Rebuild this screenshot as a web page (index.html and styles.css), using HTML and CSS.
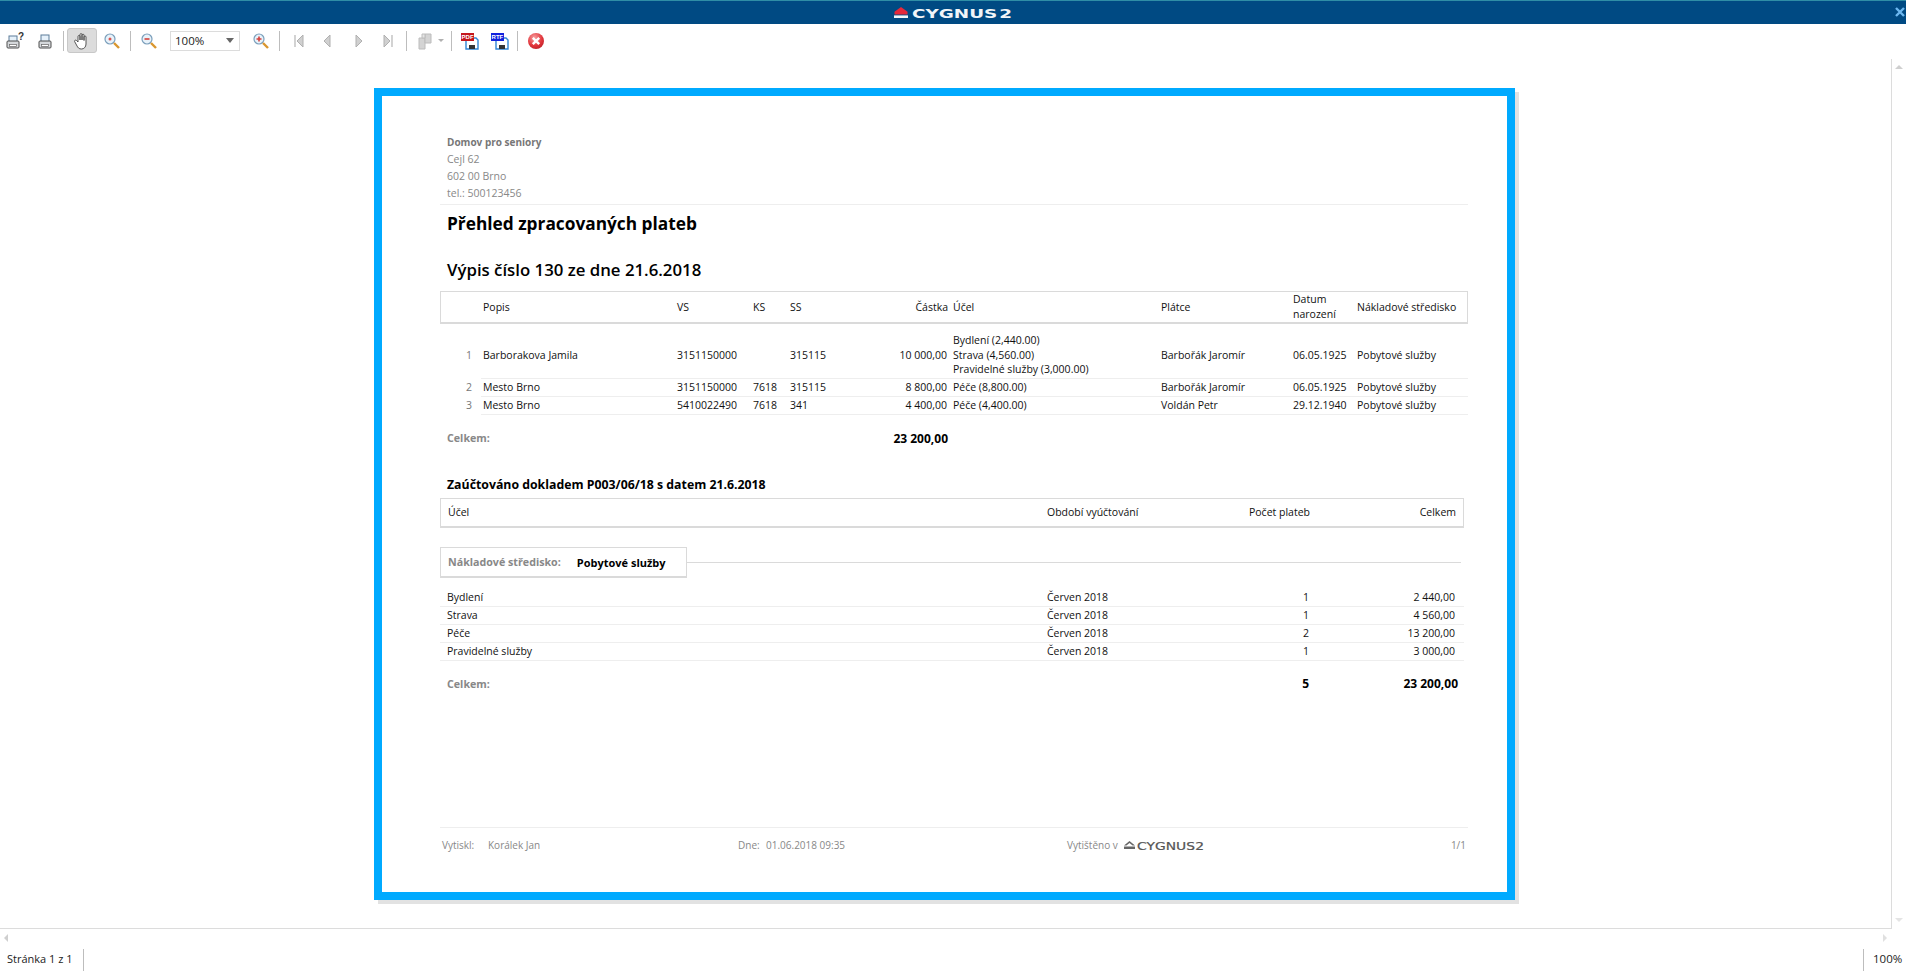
FILE: index.html
```html
<!DOCTYPE html>
<html lang="cs">
<head>
<meta charset="utf-8">
<title>Přehled zpracovaných plateb</title>
<link rel="stylesheet" href="styles.css">
</head>
<body>
<header class="titlebar">
  <svg class="brand-mark" viewBox="0 0 14 11" width="14" height="11"><path d="M7 0 L13.5 4.8 V7.4 H0.5 V4.8 Z" fill="#e5283a"/><rect x="0" y="8.4" width="14" height="2.6" fill="#f4f6f8"/></svg>
  <svg class="brand-text" viewBox="0 0 100 14" width="100" height="14"><text x="0" y="12" textLength="100" lengthAdjust="spacingAndGlyphs" class="brand-word brand-light">CYGNUS 2</text></svg>
  <svg class="win-close" viewBox="0 0 10 10" width="10" height="10"><path d="M1 1 L9 9 M9 1 L1 9" stroke="#6db8f0" stroke-width="2.4"/></svg>
</header>

<nav class="toolbar">
  <span class="tool w30"><svg viewBox="0 0 20 20" width="20" height="20"><rect x="4" y="5" width="8" height="6" fill="#e6f1fa" stroke="#5c7d99"/><rect x="2" y="10" width="12" height="7" rx="1" fill="#d5d8db" stroke="#4d4d4d"/><rect x="4.5" y="13.5" width="7" height="2" fill="#fff" stroke="#666" stroke-width=".7"/><text x="13" y="9" class="ico-q">?</text></svg></span>
  <span class="tool w30"><svg viewBox="0 0 20 20" width="20" height="20"><rect x="6" y="4" width="8" height="7" fill="#e6f1fa" stroke="#5c7d99"/><rect x="4" y="10" width="12" height="7" rx="1" fill="#d5d8db" stroke="#4d4d4d"/><rect x="6.5" y="13.5" width="7" height="2" fill="#fff" stroke="#666" stroke-width=".7"/></svg></span>
  <i class="sep ml3"></i>
  <span class="tool hand ml3"><svg viewBox="0 0 20 20" width="20" height="20"><path d="M6 11 V5.5 a1 1 0 0 1 2 0 V9 V3.6 a1 1 0 0 1 2 0 V9 V4.2 a1 1 0 0 1 2 0 V9.5 V6 a1 1 0 0 1 2 0 V13 c0 3 -2 5 -4.5 5 c-2.5 0 -3.5 -1 -5 -4 L2.6 10.5 c-.5 -1 1 -2 2 -1 z" fill="#fff" stroke="#444" stroke-width=".9"/></svg></span>
  <span class="tool w28"><svg class="nudge" viewBox="0 0 20 20" width="20" height="20"><circle cx="8" cy="8" r="5" fill="#e8f2fa" stroke="#7b9fbb" stroke-width="1.2"/><circle cx="8" cy="8" r="1.5" fill="#d9534f"/><path d="M12 12 L17 17" stroke="#d9962f" stroke-width="2.4"/></svg></span>
  <i class="sep ml5"></i>
  <span class="tool w28 ml4"><svg viewBox="0 0 20 20" width="20" height="20"><circle cx="8" cy="8" r="5" fill="#e8f2fa" stroke="#7b9fbb" stroke-width="1.2"/><path d="M5.5 8 H10.5" stroke="#d43f3a" stroke-width="1.6"/><path d="M12 12 L17 17" stroke="#d9962f" stroke-width="2.4"/></svg></span>
  <span class="combo ml7"><span>100%</span><i class="combo-arrow"></i></span>
  <span class="tool w28 ml6"><svg class="nudge" viewBox="0 0 20 20" width="20" height="20"><circle cx="8" cy="8" r="5" fill="#e8f2fa" stroke="#7b9fbb" stroke-width="1.2"/><path d="M5.5 8 H10.5 M8 5.5 V10.5" stroke="#d43f3a" stroke-width="1.6"/><path d="M12 12 L17 17" stroke="#d9962f" stroke-width="2.4"/></svg></span>
  <i class="sep ml5"></i>
  <span class="tool w28 ml5"><svg viewBox="0 0 20 20" width="20" height="20"><path d="M6 4 V16" stroke="#b5b5b5" stroke-width="1.2"/><path d="M14 4 V16 L8 10 Z" fill="#d0d0d0" stroke="#b0b0b0"/></svg></span>
  <span class="tool w28"><svg viewBox="0 0 20 20" width="20" height="20"><path d="M13 4 V16 L7 10 Z" fill="#d0d0d0" stroke="#b0b0b0"/></svg></span>
  <span class="tool w28 ml4"><svg viewBox="0 0 20 20" width="20" height="20"><path d="M7 4 V16 L13 10 Z" fill="#d0d0d0" stroke="#b0b0b0"/></svg></span>
  <span class="tool w28 ml1"><svg viewBox="0 0 20 20" width="20" height="20"><path d="M6 4 V16 L12 10 Z" fill="#d0d0d0" stroke="#b0b0b0"/><path d="M14 4 V16" stroke="#b5b5b5" stroke-width="1.2"/></svg></span>
  <i class="sep ml4"></i>
  <span class="tool w24 ml6"><svg viewBox="0 0 20 20" width="20" height="20"><path d="M4 7 H10 V18 H4 Z" fill="#d4d4d4" stroke="#bcbcbc"/><path d="M10 3 H16 V12 H10 Z" fill="#d4d4d4" stroke="#bcbcbc"/><path d="M7 3 H10 V7 H7 Z" fill="#e4e4e4" stroke="#bcbcbc"/></svg></span>
  <span class="dd"></span>
  <i class="sep ml6"></i>
  <span class="tool w28 ml4"><svg viewBox="0 0 20 20" width="20" height="20"><path d="M6 7 H16 L18 9 V18 H6 Z" fill="#fff" stroke="#2f86d6" stroke-width="1.4"/><rect x="9" y="14" width="6" height="4" fill="#333"/><rect x="1" y="2" width="13" height="8" fill="#c4151c"/><text x="1.6" y="8.4" class="ico-label">PDF</text></svg></span>
  <span class="tool w30 ml1"><svg viewBox="0 0 20 20" width="20" height="20"><path d="M6 7 H16 L18 9 V18 H6 Z" fill="#fff" stroke="#2f86d6" stroke-width="1.4"/><rect x="9" y="14" width="6" height="4" fill="#333"/><rect x="1" y="2" width="13" height="8" fill="#1122dd"/><text x="1.6" y="8.4" class="ico-label">RTF</text></svg></span>
  <i class="sep ml2"></i>
  <span class="tool w28 ml4"><svg viewBox="0 0 20 20" width="20" height="20"><defs><radialGradient id="redball" cx=".4" cy=".3" r=".8"><stop offset="0" stop-color="#f7a0a0"/><stop offset=".6" stop-color="#e2363c"/><stop offset="1" stop-color="#b81d24"/></radialGradient></defs><circle cx="10" cy="10" r="8" fill="url(#redball)"/><path d="M6.8 6.8 L13.2 13.2 M13.2 6.8 L6.8 13.2" stroke="#fff" stroke-width="2.4"/></svg></span>
</nav>

<div class="workspace">
  <main class="viewer">
    <article class="paper">
      <section class="company">
        <div class="company-name">Domov pro seniory</div>
        <div>Cejl 62</div>
        <div>602 00 Brno</div>
        <div>tel.: 500123456</div>
      </section>
      <h1 class="title">Přehled zpracovaných plateb</h1>
      <h2 class="subtitle">Výpis číslo 130 ze dne 21.6.2018</h2>

      <div class="t1 t1-head">
        <span></span><span>Popis</span><span>VS</span><span>KS</span><span>SS</span>
        <span class="amount">Částka</span><span>Účel</span><span>Plátce</span>
        <span>Datum<br>narození</span><span>Nákladové středisko</span>
      </div>
      <div class="t1 t1-row tall">
        <span class="num">1</span><span>Barborakova Jamila</span><span>3151150000</span><span></span><span>315115</span>
        <span class="amount">10 000,00</span><span>Bydlení (2,440.00)<br>Strava (4,560.00)<br>Pravidelné služby (3,000.00)</span>
        <span>Barbořák Jaromír</span><span>06.05.1925</span><span>Pobytové služby</span>
      </div>
      <div class="t1 t1-row">
        <span class="num">2</span><span>Mesto Brno</span><span>3151150000</span><span>7618</span><span>315115</span>
        <span class="amount">8 800,00</span><span>Péče (8,800.00)</span>
        <span>Barbořák Jaromír</span><span>06.05.1925</span><span>Pobytové služby</span>
      </div>
      <div class="t1 t1-row">
        <span class="num">3</span><span>Mesto Brno</span><span>5410022490</span><span>7618</span><span>341</span>
        <span class="amount">4 400,00</span><span>Péče (4,400.00)</span>
        <span>Voldán Petr</span><span>29.12.1940</span><span>Pobytové služby</span>
      </div>
      <div class="t1 t1-total">
        <span class="total-label">Celkem:</span><span class="amount strong big">23 200,00</span>
      </div>

      <h3 class="booked">Zaúčtováno dokladem P003/06/18 s datem 21.6.2018</h3>
      <div class="t2 t2-head">
        <span>Účel</span><span>Období vyúčtování</span><span class="end">Počet plateb</span><span class="end">Celkem</span>
      </div>
      <div class="group">
        <div class="group-box"><span class="group-label">Nákladové středisko:</span><span class="strong group-value">Pobytové služby</span></div>
        <div class="group-line"></div>
      </div>
      <div class="t2 t2-row first">
        <span>Bydlení</span><span>Červen 2018</span><span class="end">1</span><span class="end">2 440,00</span>
      </div>
      <div class="t2 t2-row">
        <span>Strava</span><span>Červen 2018</span><span class="end">1</span><span class="end">4 560,00</span>
      </div>
      <div class="t2 t2-row">
        <span>Péče</span><span>Červen 2018</span><span class="end">2</span><span class="end">13 200,00</span>
      </div>
      <div class="t2 t2-row">
        <span>Pravidelné služby</span><span>Červen 2018</span><span class="end">1</span><span class="end">3 000,00</span>
      </div>
      <div class="t2 t2-total">
        <span class="total-label">Celkem:</span><span></span><span class="end strong big">5</span><span class="end strong big wide">23 200,00</span>
      </div>

      <footer class="foot">
        <span class="f-a">Vytiskl:</span><span class="f-b">Korálek Jan</span>
        <span class="f-c">Dne:</span><span class="f-d">01.06.2018 09:35</span>
        <span class="f-e">Vytištěno v</span>
        <span class="f-logo">
          <svg viewBox="0 0 11 8" width="11" height="8"><path d="M5.5 0 L11 4.5 H8.6 L5.5 2 L2.4 4.5 H0 Z" fill="#666"/><rect y="5.5" width="11" height="2.5" fill="#666"/></svg>
          <svg viewBox="0 0 67 13" width="67" height="13"><text x="0" y="10.5" textLength="67" lengthAdjust="spacingAndGlyphs" class="brand-word brand-dark">CYGNUS 2</text></svg>
        </span>
        <span class="f-page">1/1</span>
      </footer>
    </article>
  </main>
  <aside class="vscroll"><i class="arrow up"></i><i class="arrow down"></i></aside>
</div>

<div class="hscroll"><i class="arrow left"></i><i class="arrow right"></i></div>

<div class="statusbar">
  <span class="status-page">Stránka 1 z 1</span>
  <span class="status-zoom">100%</span>
</div>
</body>
</html>
```

FILE: styles.css
```css
* { box-sizing: border-box; }
html, body { margin: 0; padding: 0; height: 971px; overflow: hidden; background: #fff; }
body {
  display: flex; flex-direction: column;
  font-family: "Open Sans", "Noto Sans", sans-serif;
  font-size: 10.5px; color: #111;
}

/* title bar */
.titlebar {
  height: 24px; flex: none; position: relative;
  display: flex; align-items: center; justify-content: center; gap: 4px;
  background: #004a83; border-top: 1px solid #2f8ea6;
}
.brand-word { font-family: "DejaVu Sans", sans-serif; word-spacing: -3px; }
.brand-light { font-size: 12.5px; font-weight: 700; fill: #f2f5f8; }
.brand-dark { font-size: 10px; font-weight: 400; fill: #555; stroke: #555; stroke-width: .2px; }
.win-close { position: absolute; right: 1px; top: 6px; }

/* toolbar */
.toolbar { height: 34px; flex: none; display: flex; align-items: center; padding-bottom: 1px; }
.tool { height: 25px; display: flex; align-items: center; justify-content: center; flex: none; }
.nudge { margin-left: 2px; }
.w24 { width: 24px; } .w28 { width: 28px; } .w30 { width: 30px; }
.ml1 { margin-left: 1px; } .ml2 { margin-left: 2px; } .ml3 { margin-left: 3px; }
.ml4 { margin-left: 4px; } .ml5 { margin-left: 5px; } .ml6 { margin-left: 6px; } .ml7 { margin-left: 7px; }
.hand { width: 30px; background: #dcdcdc; border: 1px solid #c8c8c8; border-radius: 3px; }
.sep { width: 1px; height: 20px; background: #bdbdbd; flex: none; }
.combo {
  width: 70px; height: 20px; flex: none; display: flex; align-items: center; justify-content: space-between;
  border: 1px solid #dcdcdc; padding: 0 5px 0 4px; font-size: 11.5px; color: #222;
}
.combo-arrow { border: 4px solid transparent; border-top: 5px solid #666; border-bottom: 0; }
.dd { width: 8px; flex: none; height: 3px; }
.dd::after { content: ""; display: block; width: 0; margin: 0 auto; border: 3px solid transparent; border-top: 3px solid #b0b0b0; border-bottom: 0; }
.ico-q { font: 700 10px "Liberation Sans", sans-serif; fill: #333; }
.ico-label { font: 700 6px "Liberation Sans", sans-serif; fill: #fff; }

/* workspace */
.workspace { height: 870px; flex: none; display: flex; }
.viewer { flex: 1; padding: 30px 0 0 374px; min-width: 0; }
.vscroll {
  width: 15px; flex: none; margin-top: 1px; border-left: 1px solid #dcdcdc;
  display: flex; flex-direction: column; justify-content: space-between; align-items: center;
  padding: 6px 0;
}
.arrow { display: block; width: 0; height: 0; border: 3px solid transparent; }
.arrow.up { border-bottom: 4px solid #cfcfcf; border-top: 0; border-left-width: 4px; border-right-width: 4px; }
.arrow.down { border-top: 4px solid #e4e4e4; border-bottom: 0; border-left-width: 4px; border-right-width: 4px; }
.hscroll {
  width: 1892px; height: 21px; flex: none; border-top: 1px solid #dcdcdc;
  display: flex; justify-content: space-between; align-items: center; padding: 0 5px 2px 4px;
}
.arrow.left { border-right: 4px solid #cfcfcf; border-left: 0; border-top-width: 4px; border-bottom-width: 4px; }
.arrow.right { border-left: 4px solid #e0e0e0; border-right: 0; border-top-width: 4px; border-bottom-width: 4px; }

/* status bar */
.statusbar { flex: 1; display: flex; justify-content: space-between; font-size: 11px; color: #222; line-height: 20px; }
.status-page { width: 84px; padding-left: 7px; border-right: 1px solid #bdbdbd; }
.status-zoom { width: 43px; padding-left: 9px; border-left: 1px solid #bdbdbd; font-size: 11.5px; }

/* paper */
.paper {
  width: 1141px; height: 812px; background: #fff;
  border: 8px solid #00aaff; box-shadow: 4px 4px 0 #e2e2e2;
  padding: 0 39px 0 58px;
}
.company {
  height: 109px; padding: 38px 0 0 7px; border-bottom: 1px solid #eee;
  line-height: 17px; color: #888;
}
.company-name { font-weight: 700; font-size: 10px; color: #777; }
.title { margin: 0; padding-left: 7px; height: 40px; line-height: 38px; font-size: 17.3px; font-weight: 700; color: #000; }
.subtitle { margin: 0; padding: 4px 0 0 7px; height: 46px; line-height: 42px; font-size: 16.8px; font-weight: 600; color: #000; }

/* first table */
.t1 { display: grid; grid-template-columns: 43px 194px 76px 37px 61px 102px 208px 132px 64px 111px; align-items: center; }
.t1-head { height: 33px; border: 2px solid #dadada; border-width: 1.5px 1px 2px; line-height: 15px; }
.t1-head > span { margin-left: -1px; }
.t1-row { grid-template-rows: 1fr 1px; height: 18px; padding-bottom: 0; }
.t1-row > span { margin-bottom: 1px; }
.t1-row.tall { height: 55px; line-height: 14.5px; }
.t1-row.tall > span { margin: 8px 0 0; }
.t1-row::after { content: ""; grid-column: 2 / -1; grid-row: 2; height: 1px; background: #eee; margin-left: -2px; }
.num { text-align: right; padding-right: 11px; color: #777; }
.amount { text-align: right; padding-right: 6px; }
.strong { font-weight: 700; color: #000; }
.big { font-size: 12px; }
.t1-total .amount.big { padding-right: 5px; }
.t1-total { height: 18px; margin-top: 14px; }
.t1-total .total-label { grid-column: 1 / 6; padding-left: 7px; }
.t1-total .amount { grid-column: 6; }
.total-label { font-weight: 700; font-size: 10.7px; color: #888; }

.booked { margin: 29px 0 0; padding-left: 7px; height: 18px; line-height: 18px; font-size: 12.3px; font-weight: 700; color: #000; }

/* second table */
.t2 { display: grid; grid-template-columns: 607px 200px 62px 155px; width: 1024px; align-items: center; }
.t2 > :first-child { padding-left: 7px; }
.end { text-align: right; padding-right: 9px; }
.t2 .end:nth-child(3) { padding-right: 0; }
.t2 .wide { padding-right: 6px; }
.t2-head { height: 30px; margin-top: 4px; border: 1px solid #dadada; border-bottom-width: 2px; padding-bottom: 1px; }
.t2-head > span { margin-left: -1px; }
.t2-head > :first-child { padding-left: 8px; }
.group { display: flex; height: 31px; margin-top: 19px; }
.group-box {
  width: 247px; display: flex; align-items: center; gap: 16px;
  border: 1px solid #dadada; border-bottom-width: 2px; padding-left: 7px;
}
.group-label { font-weight: 700; font-size: 10.7px; color: #888; }
.group-value { font-size: 11px; }
.group-line { width: 774px; height: 1px; margin-top: 15px; background: #dadada; }
.t2-row { height: 18px; border-bottom: 1px solid #eee; padding-bottom: 2px; }
.t2-row.first { margin-top: 11px; }
.t2-total { height: 18px; margin-top: 14px; padding-bottom: 1px; }

/* footer */
.foot { display: flex; margin-top: 134px; padding: 8px 0 0 2px; border-top: 1px solid #eee; line-height: 18px; color: #888; font-size: 10px; }
.f-a { width: 46px; } .f-b { width: 250px; } .f-c { width: 28px; } .f-d { width: 301px; } .f-e { width: 57px; }
.f-logo { width: 80px; display: flex; align-items: center; gap: 2px; }
.f-page { flex: 1; text-align: right; padding-right: 2px; }
```
